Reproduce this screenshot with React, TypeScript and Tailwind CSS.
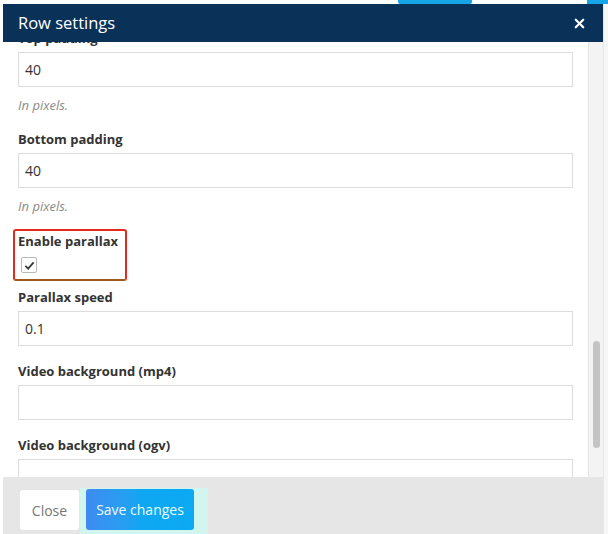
import { X } from 'lucide-react';

const font = { fontFamily: '"Open Sans", "Liberation Sans", sans-serif' };

function Label({ children, className = '' }: { children: React.ReactNode; className?: string }) {
  return (
    <div className={`text-[13px] leading-[18px] font-bold text-[#333] ${className}`}>{children}</div>
  );
}

function Field({ value = '' }: { value?: string }) {
  return (
    <div className="mt-[5px] h-[35px] border border-[#dcdcdc] bg-white flex items-center px-[6px] text-[14px] text-[#333]">
      {value}
    </div>
  );
}

function Help() {
  return <div className="mt-[10px] text-[13px] leading-[16px] italic text-[#8a8a8a]">In pixels.</div>;
}

export default function App() {
  return (
    <div className="w-[608px] h-[534px] overflow-hidden bg-white flex flex-col" style={font}>
      {/* page behind the modal */}
      <div className="h-[4px] flex shrink-0">
        <div className="w-[398px]" />
        <div className="w-[74px] bg-[#16a6e8] rounded-b-[2px]" />
        <div className="w-[115px]" />
        <div className="flex-1 bg-[#16a6e8]" />
      </div>

      <div className="flex flex-1 min-h-0">
        <div className="w-[3px] bg-white shrink-0" />

        {/* modal */}
        <div className="w-[600px] flex flex-col bg-white">
          <div className="h-[38px] shrink-0 bg-[#0a3259] flex items-center justify-between pl-[15px] pr-[16px]">
            <span className="text-white text-[16.5px] leading-none">Row settings</span>
            <X className="w-[15px] h-[15px] text-white" strokeWidth={3.5} />
          </div>

          <div className="h-[435px] shrink-0 flex overflow-hidden">
            <div className="flex-1 px-[15px] overflow-hidden">
              <div className="-mt-[13px]">
                <Label>Top padding</Label>
                <Field value="40" />
                <Help />

                <Label className="mt-[17px]">Bottom padding</Label>
                <Field value="40" />
                <Help />

                <div className="mt-[15px] -ml-[5px] w-[114px] h-[52px] border-2 border-[#e62a1c] border-b-[#9c5a20] rounded-[3px] pl-[3px] pt-[1px]">
                  <Label>Enable parallax</Label>
                  <div className="mt-[7px] ml-[3px] w-[16px] h-[16px] border border-[#b9b9b9] rounded-[2px] bg-white flex items-center justify-center">
                    <svg viewBox="0 0 12 12" className="w-[11px] h-[11px]">
                      <path d="M1.5 6.5 L4.5 9.5 L10.5 2.5" fill="none" stroke="#3a3a3a" strokeWidth="2" />
                    </svg>
                  </div>
                </div>

                <Label className="mt-[7px]">Parallax speed</Label>
                <Field value="0.1" />

                <Label className="mt-[16px]">Video background (mp4)</Label>
                <Field />

                <Label className="mt-[16px]">Video background (ogv)</Label>
                <Field />
              </div>
            </div>

            {/* scrollbar */}
            <div className="w-[15px] shrink-0 bg-[#f3f3f3] border-l border-[#e4e4e4] flex flex-col items-center">
              <div className="mt-[299px] w-[7px] h-[107px] rounded-full bg-[#c4c4c4]" />
            </div>
          </div>

          <div className="flex-1 bg-[#e6e6e6] pt-[13px] pl-[17px] flex items-start">
            <button className="w-[59px] h-[40px] bg-white rounded-[3px] text-[14px] text-[#777]">Close</button>
            <div className="-mt-[2px] ml-[1px] pl-[6px] pr-[14px] pt-[1px] h-[60px] bg-[#d2f6ef]">
              <button className="w-[108px] h-[41px] rounded-[3px] text-[14px] text-[#eafcff] bg-gradient-to-r from-[#3d8bf0] via-[#10a6f2] to-[#0aaaf2]">
                Save changes
              </button>
            </div>
          </div>
        </div>

        <div className="flex-1 bg-[#f7f7f7] border-l border-[#e8e8e8]" />
      </div>
    </div>
  );
}
